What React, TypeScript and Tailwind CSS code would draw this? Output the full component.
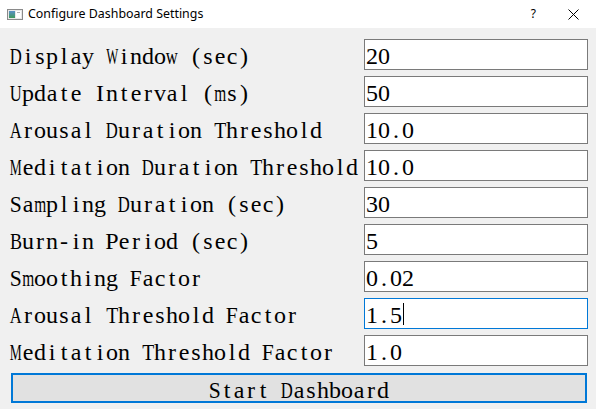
import React from "react";

const rows: { label: string; value: string; focused?: boolean }[] = [
  { label: "Display Window (sec)", value: "20" },
  { label: "Update Interval (ms)", value: "50" },
  { label: "Arousal Duration Threshold", value: "10.0" },
  { label: "Meditation Duration Threshold", value: "10.0" },
  { label: "Sampling Duration (sec)", value: "30" },
  { label: "Burn-in Period (sec)", value: "5" },
  { label: "Smoothing Factor", value: "0.02" },
  { label: "Arousal Threshold Factor", value: "1.5", focused: true },
  { label: "Meditation Threshold Factor", value: "1.0" },
];

// Approximate Times advance widths (per 1000 em)
const W: Record<string, number> = {
  A: 722, B: 667, C: 667, D: 722, E: 611, F: 556, G: 722, H: 722, I: 333, M: 889,
  R: 667, S: 556, T: 611, U: 722, W: 944,
  a: 444, b: 500, c: 444, d: 500, e: 444, f: 333, g: 500, h: 500, i: 278, l: 278,
  m: 778, n: 500, o: 500, p: 500, r: 333, s: 389, t: 278, u: 500, v: 500, w: 722, y: 500,
};

function Mono({ text }: { text: string }) {
  return (
    <>
      {text.split("").map((ch, i) => {
        const w = ((W[ch] ?? 500) * 24) / 1000;
        const s = w > 12.5 ? 12 / w : 1;
        return (
          <span key={i} className="inline-flex w-[12px] justify-center">
            <span className="inline-block" style={s < 1 ? { transform: `scaleX(${s.toFixed(3)})` } : undefined}>
              {ch === " " ? "\u00a0" : ch}
            </span>
          </span>
        );
      })}
    </>
  );
}

function AppIcon() {
  return (
    <svg width="16" height="11" viewBox="0 0 16 11">
      <defs>
        <linearGradient id="g" x1="0" y1="0" x2="0" y2="1">
          <stop offset="0" stopColor="#5a8fc8" />
          <stop offset="1" stopColor="#3f9a5a" />
        </linearGradient>
      </defs>
      <rect x="0.5" y="0.5" width="15" height="10" fill="#e8e8e8" stroke="#8a8a8a" />
      <rect x="2" y="2" width="6" height="7" fill="url(#g)" />
      <rect x="9" y="2" width="5" height="7" fill="#ffffff" />
      <rect x="10" y="3" width="3" height="1" fill="#b0b0b0" />
    </svg>
  );
}

export default function App() {
  return (
    <div className="w-[596px] h-[409px] bg-[#f0f0f0] flex flex-col overflow-hidden">
      <div className="h-[28px] bg-white flex items-center relative shrink-0">
        <div className="ml-[7px] mt-[1px] flex items-center">
          <AppIcon />
        </div>
        <span className="ml-[5px] text-[12.4px] text-black font-['Noto_Sans',sans-serif] leading-none">
          Configure Dashboard Settings
        </span>
        <span className="ml-auto mr-[32px] text-[12px] text-black font-['Noto_Sans',sans-serif] leading-none">
          ?
        </span>
        <svg width="11" height="11" viewBox="0 0 11 11" className="mr-[17px]">
          <path d="M0.5 0.5 L10.5 10.5 M10.5 0.5 L0.5 10.5" stroke="#000" strokeWidth="1" />
        </svg>
      </div>
      <div className="pt-[11px] pl-[10px] flex flex-col gap-[6px] font-['Liberation_Serif',serif] text-[24px] text-black">
        {rows.map((r) => (
          <div key={r.label} className="flex items-center h-[31px]">
            <div className="w-[354px] whitespace-nowrap leading-none pt-[3px]">
              <Mono text={r.label} />
            </div>
            <div
              className={
                "w-[224px] h-[31px] bg-white border flex items-center pl-[1px] leading-none " +
                (r.focused ? "border-[#0078d7]" : "border-[#7a7a7a]")
              }
            >
              <span className="pt-[3px] whitespace-nowrap">
                <Mono text={r.value} />
              </span>
              {r.focused && <span className="w-[1px] h-[22px] bg-black ml-[1px]" />}
            </div>
          </div>
        ))}
        <div className="ml-[1px] mt-[1px] w-[576px] h-[30px] bg-[#e1e1e1] border-2 border-[#0078d7] flex items-center justify-center leading-none">
          <span className="pt-[3px] whitespace-nowrap">
            <Mono text="Start Dashboard" />
          </span>
        </div>
      </div>
    </div>
  );
}
